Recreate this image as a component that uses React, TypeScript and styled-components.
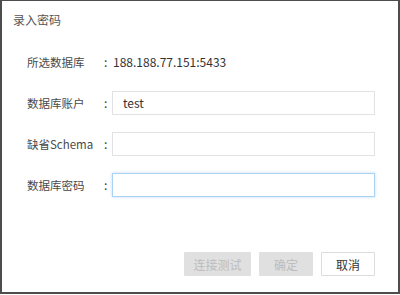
import React from 'react'
import styled, { createGlobalStyle } from 'styled-components'

const Global = createGlobalStyle`
  html, body {
    margin: 0;
    padding: 0;
    background: #ffffff;
  }
  body {
    font-family: "Noto Sans CJK SC", "Noto Sans", sans-serif;
  }
`

const fields = [
  { label: '数据库账户', value: 'test', focused: false },
  { label: '缺省Schema', value: '', focused: false },
  { label: '数据库密码', value: '', focused: true },
]

export default function App() {
  return (
    <>
      <Global />
      <Dialog>
        <Header>录入密码</Header>
        <Form>
          <Row>
            <Label>所选数据库</Label>
            <Colon>:</Colon>
            <Value>188.188.77.151:5433</Value>
          </Row>
          {fields.map((f) => (
            <Row key={f.label}>
              <Label>{f.label}</Label>
              <Colon>:</Colon>
              <Input $focused={f.focused} defaultValue={f.value} type={f.label === '数据库密码' ? 'password' : 'text'} />
            </Row>
          ))}
        </Form>
        <Footer>
          <Button $variant="disabled" $width={67}>连接测试</Button>
          <Button $variant="disabled" $width={54}>确定</Button>
          <Button $variant="normal" $width={54}>取消</Button>
        </Footer>
      </Dialog>
    </>
  )
}

const Dialog = styled.div`
  box-sizing: border-box;
  width: 400px;
  height: 294px;
  border: 2px solid #4d4d4d;
  border-top-width: 1px;
  background: #fff;
  display: flex;
  flex-direction: column;
`

const Header = styled.div`
  height: 36px;
  padding-left: 11px;
  display: flex;
  align-items: center;
  font-size: 12px;
  color: #555;
`

const Form = styled.div`
  padding: 4px 23px 0 25px;
`

const Row = styled.div`
  height: 41px;
  display: flex;
  align-items: center;
  font-size: 11.5px;
`

const Label = styled.span`
  width: 75px;
  color: #4a4a4a;
`

const Colon = styled.span`
  width: 10px;
  padding-left: 2px;
  box-sizing: border-box;
  color: #333;
  font-size: 12px;
`

const Value = styled.span`
  color: #333;
  font-size: 12px;
  padding-left: 1px;
`

const Input = styled.input<{ $focused: boolean }>`
  flex: 1;
  box-sizing: border-box;
  height: 24px;
  padding: 0 10px;
  font: inherit;
  font-size: 12px;
  color: #333;
  outline: none;
  border: 1px solid ${(p) => (p.$focused ? '#a9d2f5' : '#e2e2e2')};
  box-shadow: ${(p) => (p.$focused ? '0 0 3px rgba(120, 180, 240, 0.45)' : 'none')};
  background: #fff;
`

const Footer = styled.div`
  margin-top: auto;
  display: flex;
  justify-content: flex-end;
  gap: 8px;
  padding: 0 23px 16px 0;
`

const Button = styled.button<{ $variant: 'disabled' | 'normal'; $width: number }>`
  box-sizing: border-box;
  width: ${(p) => p.$width}px;
  height: 24px;
  font: inherit;
  font-size: 12px;
  padding: 0;
  border-radius: 1px;
  cursor: ${(p) => (p.$variant === 'disabled' ? 'default' : 'pointer')};
  background: ${(p) => (p.$variant === 'disabled' ? '#e0e0e0' : '#ffffff')};
  color: ${(p) => (p.$variant === 'disabled' ? '#bcbcbc' : '#333')};
  border: 1px solid ${(p) => (p.$variant === 'disabled' ? '#e0e0e0' : '#dcdcdc')};
`
